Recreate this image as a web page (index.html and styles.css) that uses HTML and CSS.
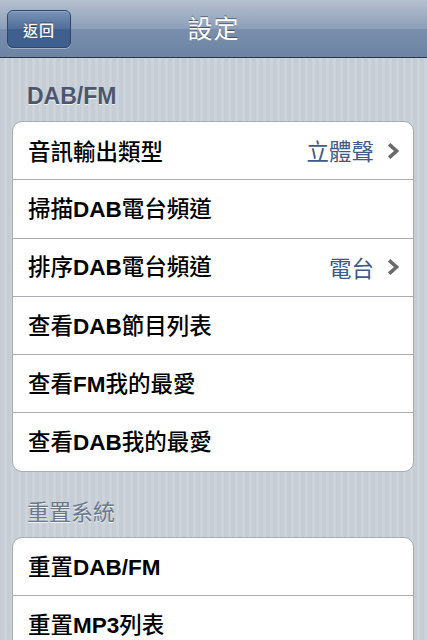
FILE: index.html
```html
<!DOCTYPE html>
<html lang="zh-Hant">
<head>
<meta charset="utf-8">
<title>設定</title>
<link rel="stylesheet" href="styles.css">
</head>
<body>
<div class="screen">
  <header class="navbar">
    <button class="back">返回</button>
    <h1 class="title">設定</h1>
  </header>
  <main class="content">
    <h2 class="section-title en-title">DAB/FM</h2>
    <ul class="group">
      <li class="row"><span class="label">音訊輸出類型</span><span class="value">立體聲</span><svg class="chev" viewBox="0 0 11 16"><polyline points="2.5,2.5 8.5,8 2.5,13.5"/></svg></li>
      <li class="row"><span class="label">掃描<b class="en">DAB</b>電台頻道</span></li>
      <li class="row"><span class="label">排序<b class="en">DAB</b>電台頻道</span><span class="value">電台</span><svg class="chev" viewBox="0 0 11 16"><polyline points="2.5,2.5 8.5,8 2.5,13.5"/></svg></li>
      <li class="row"><span class="label">查看<b class="en">DAB</b>節目列表</span></li>
      <li class="row"><span class="label">查看<b class="en">FM</b>我的最愛</span></li>
      <li class="row"><span class="label">查看<b class="en">DAB</b>我的最愛</span></li>
    </ul>
    <h2 class="section-title cjk-title">重置系統</h2>
    <ul class="group">
      <li class="row"><span class="label">重置<b class="en">DAB/FM</b></span></li>
      <li class="row"><span class="label">重置<b class="en">MP3</b>列表</span></li>
    </ul>
  </main>
</div>
</body>
</html>
```
FILE: styles.css
```css
* { box-sizing: border-box; }
html, body { margin: 0; padding: 0; }
body {
  width: 427px;
  height: 640px;
  overflow: hidden;
  font-family: "Noto Sans CJK TC", "Liberation Sans", sans-serif;
}
.screen {
  width: 427px;
  height: 640px;
  background: repeating-linear-gradient(90deg, #c6cdd5 0 4px, #ccd3da 4px 7px);
  display: flex;
  flex-direction: column;
}
.navbar {
  height: 58px;
  flex: none;
  position: relative;
  display: flex;
  align-items: center;
  justify-content: center;
  background: linear-gradient(#b4c0d0 0%, #8c9fb9 50%, #7a8fad 51%, #6c83a3 100%);
  border-bottom: 1px solid #2d3642;
}
.back {
  position: absolute;
  left: 7px;
  top: 10px;
  width: 64px;
  height: 38px;
  border: 1px solid #2f4668;
  border-radius: 6px;
  background: linear-gradient(#7a93b8 0%, #4f6d99 50%, #3f5f8f 51%, #3e5e8e 100%);
  box-shadow: 0 1px 0 rgba(255,255,255,0.35), inset 0 1px 0 rgba(255,255,255,0.2);
  color: #fff;
  font-family: "Noto Sans CJK TC", sans-serif;
  font-size: 15px;
  font-weight: 500;
  letter-spacing: 1px;
  padding: 0;
  text-shadow: 0 -1px 0 rgba(0,0,0,0.45);
}
.title {
  margin: 0;
  color: #fff;
  font-size: 25px;
  font-weight: 400;
  letter-spacing: 1px;
  text-shadow: 0 -1px 0 rgba(0,0,0,0.45);
  line-height: 1;
  margin-top: -3px;
}
.content {
  padding: 0 13px 0 12px;
}
.section-title {
  margin: 0;
  padding: 0 0 0 15px;
  text-shadow: 0 1px 0 rgba(255,255,255,0.8);
}
.en-title {
  font-family: "Liberation Sans", Arial, sans-serif;
  font-weight: 700;
  font-size: 23px;
  color: #4c566c;
  height: 63px;
  line-height: 24px;
  padding-top: 26px;
}
.cjk-title {
  font-family: "Noto Sans CJK TC", sans-serif;
  font-weight: 400;
  font-size: 22px;
  color: #6a788c;
  height: 65px;
  padding-top: 24px;
  line-height: 28px;
}
.group {
  list-style: none;
  margin: 0;
  padding: 0;
  background: #fff;
  border: 1px solid #a9abae;
  border-radius: 10px;
  overflow: hidden;
}
.row {
  height: 58.3px;
  display: flex;
  align-items: center;
  padding: 0 14px 0 15px;
  border-top: 1px solid #a9abae;
  color: #000;
}
.row:first-child { border-top: none; height: 57.3px; }
.label {
  flex: 1;
  font-size: 22.5px;
  font-weight: 500;
  white-space: nowrap;
  line-height: 1;
}
.en {
  font-family: "Liberation Sans", Arial, sans-serif;
  font-weight: 700;
  font-size: 22.5px;
}
.value {
  color: #3e5a8a;
  font-size: 22.5px;
  font-weight: 400;
  margin-right: 14px;
  line-height: 1;
}
.chev {
  width: 11px;
  height: 16px;
  fill: none;
  stroke: #6a6a6a;
  stroke-width: 3.6;
  stroke-linecap: square;
}
```
